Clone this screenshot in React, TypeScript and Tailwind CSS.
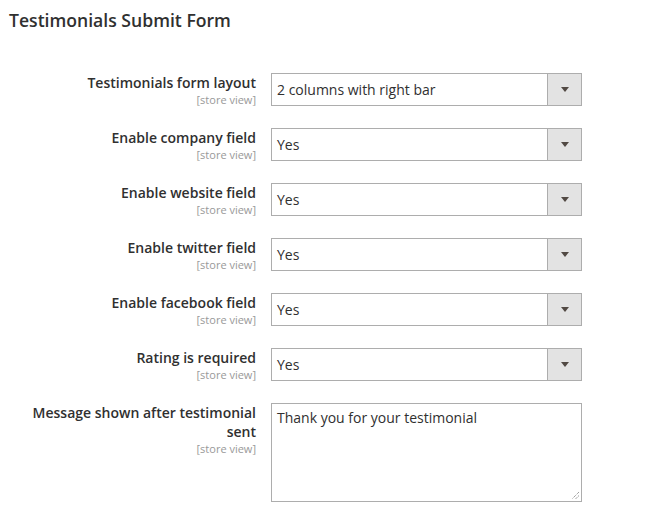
const rows = [
    { label: 'Testimonials form layout', value: '2 columns with right bar' },
    { label: 'Enable company field', value: 'Yes' },
    { label: 'Enable website field', value: 'Yes' },
    { label: 'Enable twitter field', value: 'Yes' },
    { label: 'Enable facebook field', value: 'Yes' },
    { label: 'Rating is required', value: 'Yes' },
];

function FieldLabel({ children }: { children: React.ReactNode }) {
    return (
        <div className="w-[256px] shrink-0 text-right">
            <div className="text-[14px] font-semibold leading-[19px] text-[#303030]">{children}</div>
            <div className="text-[11px] leading-[15px] text-[#999999]">[store view]</div>
        </div>
    );
}

function SelectBox({ value }: { value: string }) {
    return (
        <div className="flex h-[33px] w-[311px] border border-[#adadad] bg-white">
            <div className="flex flex-1 items-center pl-[5px] text-[14px] text-[#303030]">{value}</div>
            <div className="flex w-[34px] items-center justify-center border-l border-[#adadad] bg-[#e3e3e3]">
                <svg width="8" height="5" viewBox="0 0 8 5">
                    <path d="M0 0h8L4 5z" fill="#514943" />
                </svg>
            </div>
        </div>
    );
}

export default function App() {
    return (
        <div className="h-[520px] w-[660px] bg-white font-['Open_Sans',sans-serif]">
            <h2 className="pl-[9px] pt-[9px] text-[17.6px] font-semibold leading-[22px] text-[#303030]">
                Testimonials Submit Form
            </h2>

            <div className="mt-[42px] flex flex-col gap-[22px]">
                {rows.map((row) => (
                    <div key={row.label} className="flex h-[33px] gap-[15px]">
                        <FieldLabel>{row.label}</FieldLabel>
                        <SelectBox value={row.value} />
                    </div>
                ))}

                <div className="flex gap-[15px]">
                    <FieldLabel>
                        Message shown after testimonial
                        <br />
                        sent
                    </FieldLabel>
                    <div className="relative h-[99px] w-[311px] border border-[#adadad] bg-white px-[5px] pt-[4px] text-[14px] leading-[20px] text-[#303030]">
                        Thank you for your testimonial
                        <svg className="absolute bottom-[1px] right-[1px]" width="9" height="9" viewBox="0 0 9 9">
                            <path d="M8 1L1 8M8 4.5L4.5 8" stroke="#777" strokeWidth="1" strokeDasharray="1 1" />
                        </svg>
                    </div>
                </div>
            </div>
        </div>
    );
}
